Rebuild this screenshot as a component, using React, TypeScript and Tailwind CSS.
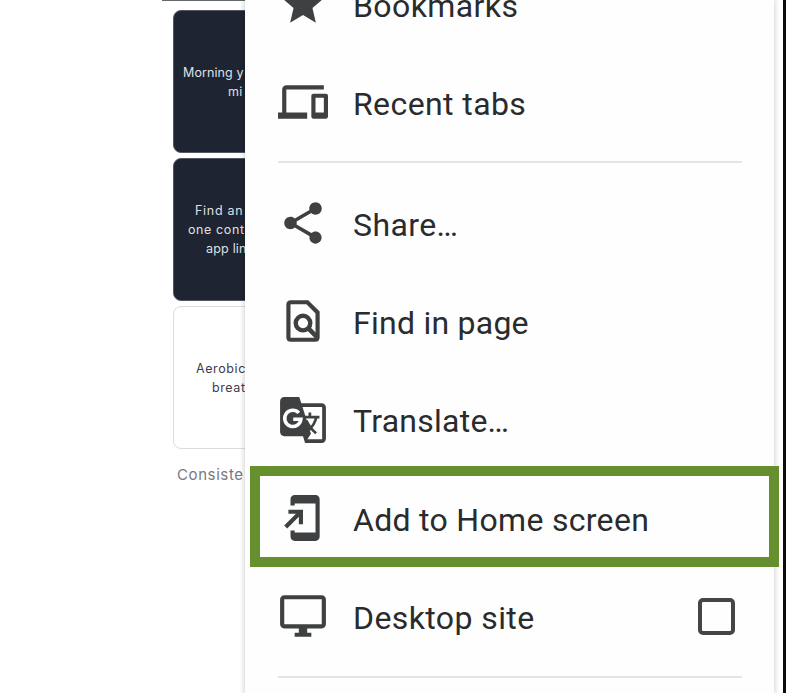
import type { ReactNode } from "react";
import {
  MdAddToHomeScreen,
  MdDevices,
  MdOutlineDesktopWindows,
  MdShare,
  MdStar,
} from "react-icons/md";

function FindInPageIcon() {
  return (
    <svg viewBox="0 0 24 24" className="size-[50px]" fill="none" stroke="currentColor" strokeWidth="2">
      <path d="M14.1 3H6.2C5.5 3 5 3.5 5 4.2v15.6c0 .7.5 1.2 1.2 1.2h11.6c.7 0 1.2-.5 1.2-1.2V7.9z" />
      <circle cx="12" cy="13" r="3.5" strokeWidth="2.1" />
      <path d="M14.3 15.3l4.2 4.2" strokeWidth="2.2" />
    </svg>
  );
}

function TranslateIcon() {
  return (
    <svg viewBox="0 0 24 24" className="size-[50px]" fill="none" stroke="currentColor">
      <path d="M11 4.9h10c.6 0 1.1.5 1.1 1.1v15c0 .6-.5 1.1-1.1 1.1h-8" strokeWidth="1.8" />
      <path
        d="M3 1h7.2l1 3 4.6 14.6L13 23l-1-3.2H3c-1.1 0-2-.9-2-2V3c0-1.1.9-2 2-2z"
        fill="currentColor"
        stroke="none"
      />
      <path d="M11.6 10.6h8.3M15.3 8.4v2.2M18.4 10.8c-.5 2-1.7 4.2-3.6 6M13.6 12.2c1 2.3 2.6 4.4 4.7 6.2" strokeWidth="1.3" />
      <path d="M10 8.6A3.9 3.9 0 1 0 11 11.6H7.3" stroke="white" strokeWidth="1.7" />
    </svg>
  );
}

function MenuRow({ icon, label, tracking, children }: { icon: ReactNode; label: string; tracking: string; children?: ReactNode }) {
  return (
    <div className="flex h-[98.3px] shrink-0 items-center pl-[33px] pr-[39px]">
      <div className="flex w-[50px] shrink-0 justify-center text-[#3f4041]">{icon}</div>
      <span className={`ml-[25px] mt-[3px] whitespace-nowrap text-[32px] leading-10 ${tracking}`}>{label}</span>
      {children}
    </div>
  );
}

function Divider() {
  return <div className="ml-[33px] mr-[32px] h-[2px] shrink-0 bg-[#e3e4e7]" />;
}

function PageBehind() {
  return (
    <div className="h-full w-[245px] shrink-0 overflow-hidden whitespace-nowrap font-['Inter',sans-serif] text-[12.5px] leading-[19px]">
      <div className="ml-[162px] h-px bg-[#65666e]" />
      <div className="ml-[173px] mt-[9px] h-[143px] w-[180px] rounded-[8px] border border-[#535865] bg-[#1e2431] pt-[52px] text-[#dfe1e7]">
        <p className="pl-[9px] tracking-[0.1px]">Morning y</p>
        <p className="pl-[54px] tracking-[0.3px]">mi</p>
      </div>
      <div className="ml-[173px] mt-[5px] h-[143px] w-[180px] rounded-[8px] border border-[#535865] bg-[#1e2431] pt-[42px] text-[#dfe1e7]">
        <p className="pl-[21px] tracking-[0.7px]">Find an</p>
        <p className="pl-[14px] tracking-[0.6px]">one cont</p>
        <p className="pl-[32px] tracking-[0.2px]">app lin</p>
      </div>
      <div className="ml-[173px] mt-[5px] h-[143px] w-[180px] rounded-[8px] border border-[#dcdce0] bg-white pt-[52px] text-[#3d3d4d]">
        <p className="pl-[22px] tracking-[0.6px]">Aerobic</p>
        <p className="pl-[38px] tracking-[0.6px]">breat</p>
      </div>
      <p className="mt-[16px] pl-[177px] text-[15px] tracking-[0.6px] text-[#777783]">Consiste</p>
    </div>
  );
}

export default function App() {
  return (
    <div className="relative flex h-[693px] w-[786px] overflow-hidden bg-white">
      <PageBehind />
      <div className="z-10 flex h-full w-[529px] shrink-0 flex-col bg-[#fefefe] font-['Roboto',sans-serif] text-[#2a2b2d] shadow-[0_0_5px_1px_rgba(0,0,0,0.18)]">
        <div className="-mt-[45px] flex flex-col">
          <MenuRow icon={<MdStar size={50} />} label="Bookmarks" tracking="tracking-[0.4px]" />
          <MenuRow icon={<MdDevices size={50} />} label="Recent tabs" tracking="tracking-[0.4px]" />
        </div>
        <div className="mt-[9.4px] flex flex-col">
          <Divider />
        </div>
        <div className="mt-[11px] flex flex-col">
          <MenuRow icon={<MdShare size={50} />} label="Share…" tracking="tracking-[0.4px]" />
          <MenuRow icon={<FindInPageIcon />} label="Find in page" tracking="tracking-[0.25px]" />
          <MenuRow icon={<TranslateIcon />} label="Translate…" tracking="tracking-[0.25px]" />
          <MenuRow icon={<MdAddToHomeScreen size={50} />} label="Add to Home screen" tracking="tracking-[0.3px]" />
          <MenuRow icon={<MdOutlineDesktopWindows size={50} />} label="Desktop site" tracking="tracking-[0.4px]">
            <span className="ml-auto size-[37px] rounded-[5px] border-4 border-[#444546]" />
          </MenuRow>
        </div>
        <div className="mt-[10.5px] flex flex-col">
          <Divider />
        </div>
      </div>
      <div className="z-10 ml-auto h-full w-[3px] bg-[#0c0c0d]" />
      <div className="absolute left-[250px] top-[466px] z-20 h-[101px] w-[529px] border-[10px] border-[#668f2d]" />
    </div>
  );
}
